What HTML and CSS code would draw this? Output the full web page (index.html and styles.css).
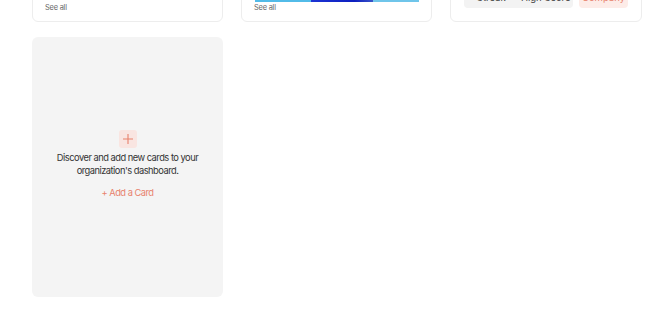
FILE: index.html
```html
<!DOCTYPE html>
<html lang="en">
<head>
<meta charset="utf-8">
<title>Dashboard</title>
<link rel="stylesheet" href="styles.css">
</head>
<body>
<main class="grid">
  <section class="card card-top">
    <div class="card-body"></div>
    <a class="see-all" href="#">See all</a>
  </section>
  <section class="card card-top">
    <div class="card-body"></div>
    <div class="bar">
      <span class="seg seg-a"></span>
      <span class="seg seg-b"></span>
      <span class="seg seg-c"></span>
    </div>
    <a class="see-all" href="#">See all</a>
  </section>
  <section class="card card-top card-tabs">
    <div class="card-body"></div>
    <div class="tabs">
      <div class="tab-group">
        <span class="tab">Streak</span>
        <span class="tab">High Score</span>
      </div>
      <span class="tab tab-active">Company</span>
    </div>
  </section>
  <section class="card card-add">
    <div class="add-icon">
      <svg width="12" height="12" viewBox="0 0 12 12"><path d="M6 1v10M1 6h10" stroke="#e8826d" stroke-width="1.1" fill="none"/></svg>
    </div>
    <p class="add-text">Discover and add new cards to your organization's dashboard.</p>
    <a class="add-link" href="#">+ Add a Card</a>
  </section>
</main>
</body>
</html>
```

FILE: styles.css
```css
* { box-sizing: border-box; }
body {
  margin: 0;
  background: #fff;
  font-family: "Inter", "Lato", sans-serif;
  color: #3a3a3a;
}
.grid {
  display: grid;
  grid-template-columns: 191px 191px 192px;
  column-gap: 18px;
  row-gap: 15px;
  margin: -60px 0 0 32px;
}
.card {
  border-radius: 6px;
}
.card-top {
  height: 82px;
  border: 1px solid #ededed;
  display: flex;
  flex-direction: column;
  justify-content: flex-end;
  padding: 0 12px 8px;
}
.card-body { flex: 1; }
.see-all {
  font-size: 7.4px;
  letter-spacing: -0.2px;
  line-height: 10px;
  color: #666;
  text-decoration: none;
}
.bar {
  display: flex;
  height: 3px;
  margin: 0 0 1px 1px;
}
.seg { height: 100%; }
.seg-a { width: 56px; background: #52bbe8; }
.seg-b { width: 62px; background: linear-gradient(90deg, #1c34d4, #0c1fbf 70%, #3a55c8); }
.seg-c { flex: 1; background: #6fc5ea; }
.card-tabs { padding: 0 13px 13px; }
.tabs {
  display: flex;
  gap: 6px;
}
.tab-group {
  display: flex;
  background: #f3f3f3;
  border-radius: 4px;
  width: 110px;
}
.tab {
  flex: 1;
  height: 20px;
  line-height: 20px;
  text-align: center;
  font-size: 9.5px;
  color: #444;
}
.tab-active {
  flex: 0 0 49px;
  background: #fdece8;
  color: #e8826d;
  border-radius: 4px;
}
.card-add {
  height: 260px;
  background: #f4f4f4;
  display: flex;
  flex-direction: column;
  align-items: center;
  justify-content: center;
  padding-bottom: 6px;
}
.add-icon {
  width: 18px;
  height: 18px;
  border-radius: 3px;
  background: #f9e5e1;
  display: flex;
  align-items: center;
  justify-content: center;
}
.add-text {
  margin: 3px 0 0;
  width: 150px;
  text-align: center;
  font-size: 9.3px;
  letter-spacing: -0.5px;
  line-height: 13px;
  color: #333;
}
.add-link {
  margin-top: 9px;
  font-size: 9.3px;
  letter-spacing: -0.5px;
  line-height: 13px;
  color: #e8826d;
  text-decoration: none;
}
```
